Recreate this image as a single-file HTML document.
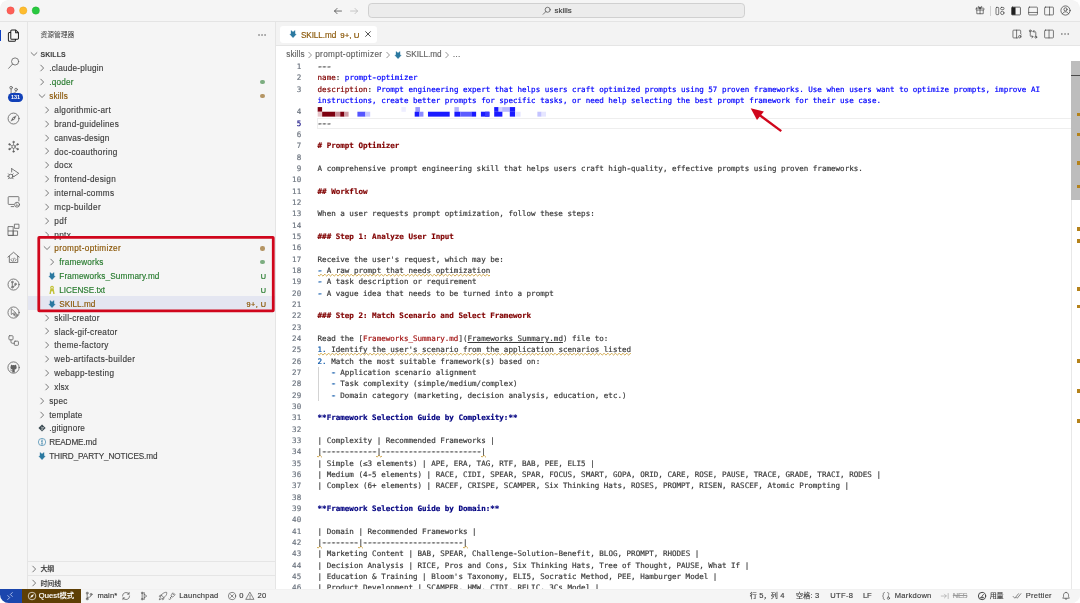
<!DOCTYPE html><html lang="zh-CN"><head><meta charset="utf-8"><title>SKILL.md — skills</title><style>
*{box-sizing:border-box;margin:0;padding:0}
html,body{width:1080px;height:603px;overflow:hidden;background:#fff}
body{font-family:"Liberation Sans", "Noto Sans CJK SC", sans-serif;font-size:13px;color:#3b3b3b;-webkit-font-smoothing:antialiased;-webkit-text-stroke:.22px}
#app{position:absolute;left:0;top:0;width:1715.65px;height:957.90px;zoom:0.6295;background:#f5f5f5;border-radius:14px;overflow:hidden;will-change:transform}
.abs{position:absolute}
#title{position:absolute;left:0;top:0;right:0;height:35px;border-bottom:1px solid #e4e4e4;background:#f5f5f5;z-index:5}
.tl{position:absolute;top:10.9px;width:12px;height:12px;border-radius:50%}
#cc{position:absolute;left:583.8px;top:5.5px;width:600.2px;height:23px;border:1px solid #d0d0d0;border-radius:6px;background:#ececec}
#act{position:absolute;left:0;top:34px;width:44px;bottom:22.5px;border-right:1px solid #e5e5e5;background:#f5f5f5}
.ai{position:absolute;left:0;width:44px;height:44px}
.ai svg{position:absolute;left:10px;top:10px;width:24px;height:24px;overflow:visible}
#side{position:absolute;left:44px;top:34px;width:395px;bottom:22.5px;border-right:1px solid #e5e5e5;background:#f5f5f5}
.row{position:absolute;left:0;right:0;height:22px;line-height:22px;white-space:nowrap;font-size:13px;color:#3b3b3b}
.row .tw{position:absolute;top:3.6px;width:16px;height:16px}
.row .lb{position:absolute;top:2.2px}
.row .dec{position:absolute;right:14.6px;top:2.2px;font-size:11.6px;text-align:right;letter-spacing:.75px;margin-right:-.75px;-webkit-text-stroke:.32px}
.dot{position:absolute;right:16.9px;top:8.2px;width:7px;height:7px;border-radius:50%;opacity:.6}
.g{color:#257a2c} .m{color:#895503}
#ed{position:absolute;left:439px;top:34px;right:0;bottom:22.5px;background:#fff}
#tabs{position:absolute;left:0;top:0;right:0;height:39.5px;background:#f3f3f3;border-bottom:1px solid #e5e5e5}
#tab{position:absolute;left:6.1px;top:7.5px;width:153.6px;height:26.5px;background:#fff;border-radius:5px}
#bc{position:absolute;left:0;top:42.2px;right:0;height:22px;line-height:22px;font-size:13px;color:#616161;white-space:nowrap}
#code{position:absolute;left:0;top:63.1px;right:0;bottom:0;font-family:"DejaVu Sans Mono", "Liberation Mono", monospace;font-size:12px;line-height:18px;color:#3b3b3b;white-space:pre;overflow:hidden;-webkit-text-stroke:.3px}
.ln{position:absolute;left:0;width:39.5px;text-align:right;color:#6e7681;height:18px}
.cl{position:absolute;left:65.5px;height:18px}
.k{color:#800000} .s{color:#0000ff} .h{color:#800000;font-weight:bold} .b{color:#000080;font-weight:bold} .l{color:#0451a5} .r{color:#a31515} .u{text-decoration:underline;text-underline-offset:2px}
.cl i{font-style:normal;-webkit-text-stroke:0;text-shadow:-1.3px 0 0 currentColor,1.3px 0 0 currentColor}
.sq{position:absolute;height:4px;top:14.300px;left:0;overflow:hidden}
#status{position:absolute;left:0;right:0;bottom:0;height:22.5px;background:#f5f5f5;border-top:1px solid #f1f1f1;font-size:12px;line-height:19.6px;color:#3b3b3b;white-space:nowrap}
.si{position:absolute;top:0;height:21.5px}
</style></head><body><div id="app">
<div id="title">
<svg class="abs" style="left:0;top:0" width="80" height="34" viewBox="0 0 80 34">
<circle cx="16.8" cy="16.8" r="5.900" fill="#fe5f57" stroke="#e14640" stroke-width=".5"/>
<circle cx="36.9" cy="16.8" r="5.900" fill="#febc2e" stroke="#dfa023" stroke-width=".5"/>
<circle cx="56.9" cy="16.8" r="5.900" fill="#28c840" stroke="#1dad2b" stroke-width=".5"/>
</svg>
<svg class="abs" style="left:528.5px;top:9px" width="16" height="16" viewBox="0 0 16 16" fill="none" stroke="#3b3b3b" stroke-width="1.15" stroke-linecap="round" stroke-linejoin="round"><path d="M13.5 8h-11M6.5 3.8 2.4 8l4.1 4.2"/></svg>
<svg class="abs" style="left:554.4px;top:9px" width="16" height="16" viewBox="0 0 16 16" fill="none" stroke="#b5b5b5" stroke-width="1.15" stroke-linecap="round" stroke-linejoin="round"><path d="M2.5 8h11M9.5 3.8 13.6 8l-4.1 4.2"/></svg>
<div id="cc">
<svg class="abs" style="left:276.2px;top:3px" width="15" height="15" viewBox="0 0 16 16" fill="none" stroke="#3b3b3b" stroke-width="1.1" stroke-linecap="round"><circle cx="9.6" cy="6.4" r="4.3"/><path d="M6.5 9.5 2 14"/></svg>
<div class="abs" style="left:295.6px;top:0;line-height:21px;font-size:12.5px;color:#3b3b3b">skills</div>
</div>
<svg class="abs" style="left:1549.6px;top:8.6px" width="16" height="16" viewBox="0 0 16 16" fill="none" stroke="#3b3b3b" stroke-width="1.05" stroke-linejoin="round" stroke-linecap="round"><rect x="1.800" y="5" width="12.400" height="3" rx=".5"/><path d="M2.900 8v5.900h10.200V8M8 5v8.900M8 4.800C6.500 4.800 4.700 4.300 4.900 3 5.200 1.700 7.300 2.300 8 4.800zM8 4.800c1.500 0 3.300-.5 3.100-1.800C10.800 1.700 8.700 2.300 8 4.800z"/></svg>
<div class="abs" style="left:1572.5px;top:9px;width:1px;height:16px;background:#d0d0d0"></div>
<svg class="abs" style="left:1581.4px;top:8.8px" width="16" height="16" viewBox="0 0 16 16" fill="none" stroke="#3b3b3b" stroke-width="1.05" stroke-linejoin="round" stroke-linecap="round"><rect x="1.600" y="2.200" width="4.300" height="11.600" rx="1.200"/><rect x="8.900" y="2.200" width="5.400" height="3.600" rx="1.500"/><circle cx="11.600" cy="11" r="2.700"/></svg>
<svg class="abs" style="left:1606.6px;top:8.8px" width="16" height="16" viewBox="0 0 16 16" fill="none" stroke="#1f1f1f" stroke-width="1.05" stroke-linejoin="round" stroke-linecap="round"><rect x="1" y="1.800" width="14" height="12.400" rx="1.200"/><path d="M1.200 2h6v12h-6z" fill="#1f1f1f" stroke="none"/></svg>
<svg class="abs" style="left:1632.7px;top:8.8px" width="16" height="16" viewBox="0 0 16 16" fill="none" stroke="#3b3b3b" stroke-width="1.05" stroke-linejoin="round" stroke-linecap="round"><rect x="1" y="1.800" width="14" height="12.400" rx="1.200"/><path d="M1 10.300h14"/></svg>
<svg class="abs" style="left:1659.0px;top:8.8px" width="16" height="16" viewBox="0 0 16 16" fill="none" stroke="#3b3b3b" stroke-width="1.05" stroke-linejoin="round" stroke-linecap="round"><rect x="1" y="1.800" width="14" height="12.400" rx="1.200"/><path d="M8.800 1.800v12.400"/></svg>
<svg class="abs" style="left:1684.0px;top:8.1px" width="17.5" height="17.5" viewBox="0 0 16 16" fill="none" stroke="#3b3b3b" stroke-width="1.05" stroke-linejoin="round" stroke-linecap="round"><circle cx="8" cy="8" r="6.700"/><circle cx="8" cy="6.300" r="2.300"/><path d="M3.500 12.900c.8-2 2.500-3 4.500-3s3.700 1 4.500 3"/></svg>
</div>
<div id="act">
<div class="abs" style="left:0;top:14px;width:1.9px;height:17.5px;background:#0d3fc2"></div>
<div class="ai" style="top:0.5px"><svg viewBox="0 0 24 24" fill="none" stroke="#1f1f1f" stroke-width="1.6" stroke-linejoin="round" stroke-linecap="round"><path d="M9.200 3.200h6.300l4.300 4.300v8.700a1.600 1.600 0 0 1-1.600 1.600H9.200a1.600 1.600 0 0 1-1.600-1.600V4.800a1.600 1.600 0 0 1 1.600-1.600zM15.300 3.400v4.300h4.300M7.600 7.200H5.400A1.600 1.600 0 0 0 3.800 8.800v10.600A1.600 1.600 0 0 0 5.400 21h8a1.600 1.600 0 0 0 1.600-1.600v-1.600"/></svg></div>
<div class="ai" style="top:44.5px"><svg viewBox="0 0 24 24" fill="none" stroke="#616161" stroke-width="1.3" stroke-linejoin="round" stroke-linecap="round"><circle cx="14.500" cy="8.700" r="5.700"/><path d="M10.400 12.900 4.200 19.600"/></svg></div>
<div class="ai" style="top:88.5px"><svg viewBox="0 0 24 24" fill="none" stroke="#616161" stroke-width="1.3" stroke-linejoin="round" stroke-linecap="round"><circle cx="8.100" cy="7.400" r="2.100"/><circle cx="16" cy="10.400" r="2.100"/><path d="M8.100 9.500v8M16 12.500c0 2.500-2 3.600-4.400 3.900"/></svg><div class="abs" style="left:12.700px;top:25.500px;width:23.700px;height:13.900px;border-radius:7px;background:#1241b8;color:#fff;font-size:8.800px;font-weight:bold;line-height:13.900px;text-align:center;letter-spacing:-.1px;-webkit-text-stroke:0">131</div></div>
<div class="ai" style="top:132.5px"><svg viewBox="0 0 24 24" fill="none" stroke="#616161" stroke-width="1.3" stroke-linejoin="round" stroke-linecap="round"><circle cx="12" cy="12" r="8.700"/><path d="M16.300 7.700 13.300 13.300 7.700 16.300 10.700 10.700z" fill="#616161" stroke-width=".5"/><circle cx="12" cy="12" r=".9" fill="#f5f5f5" stroke="none"/></svg></div>
<div class="ai" style="top:176.5px"><svg viewBox="0 0 24 24" fill="none" stroke="#616161" stroke-width="1.25" stroke-linejoin="round" stroke-linecap="round"><g transform="translate(12 12.300) scale(.9) translate(-12 -12)"><circle cx="12" cy="12" r="3"/><g fill="#616161" stroke-width=".8"><circle cx="12" cy="3.600" r="1.500"/><circle cx="12" cy="20.400" r="1.500"/><circle cx="4.800" cy="7.800" r="1.500"/><circle cx="19.200" cy="7.800" r="1.500"/><circle cx="4.800" cy="16.200" r="1.500"/><circle cx="19.200" cy="16.200" r="1.500"/></g><path d="M12 5.100v3.900M12 15v3.900M6.100 8.600 9.400 10.500M17.900 8.600 14.600 10.500M6.100 15.400 9.400 13.500M17.900 15.400 14.600 13.500" stroke-width="1.100"/></g></svg></div>
<div class="ai" style="top:220.5px"><svg viewBox="0 0 24 24" fill="none" stroke="#616161" stroke-width="1.3" stroke-linejoin="round" stroke-linecap="round"><path d="M9 4.200 20.300 11.600 12.600 16.800M9 4.200v5.300"/><circle cx="7.600" cy="16.400" r="3.300"/><path d="M4.300 16.400H2.600M12.600 16.400h-1.700M5.100 13.800 3.800 12.400M10.100 13.800l1.300-1.400M5.100 19l-1.300 1.400M10.100 19l1.300 1.400"/></svg></div>
<div class="ai" style="top:264.5px"><svg viewBox="0 0 24 24" fill="none" stroke="#616161" stroke-width="1.3" stroke-linejoin="round" stroke-linecap="round"><path d="M20.500 11V5.300a1.100 1.100 0 0 0-1.100-1.100H4.600a1.100 1.100 0 0 0-1.100 1.100v10.200a1.100 1.100 0 0 0 1.100 1.100h7.600M8.200 20h4"/><circle cx="17.600" cy="17" r="3.900"/><path d="M16.400 15.600 17.900 17l-1.500 1.400M18.600 18.500h.9" stroke-width="1.1"/></svg></div>
<div class="ai" style="top:308.5px"><svg viewBox="0 0 24 24" fill="none" stroke="#616161" stroke-width="1.3" stroke-linejoin="round" stroke-linecap="round"><path d="M3.800 7.300h7.600v14H3.800zM3.800 14.300h14.600v7H3.800M11.400 14.300v7M14 3.500h6.600v6.600H14z"/></svg></div>
<div class="ai" style="top:352.5px"><svg viewBox="0 0 24 24" fill="none" stroke="#616161" stroke-width="1.35" stroke-linejoin="round" stroke-linecap="round"><path d="M3 11.300 12 3.600l9 7.700M5.300 10v9.800h13.400V10"/><path d="M9.600 13.600 7.800 15.500l1.800 1.900M14.400 13.600l1.800 1.900-1.800 1.900M12.800 12.800 11.200 18.200" stroke-width="1.1"/></svg></div>
<div class="ai" style="top:396.5px"><svg viewBox="0 0 24 24" fill="none" stroke="#616161" stroke-width="1.3" stroke-linejoin="round" stroke-linecap="round"><circle cx="12" cy="12" r="8.800"/><circle cx="10" cy="8" r="1.300"/><circle cx="10" cy="16.300" r="1.300"/><circle cx="15" cy="11.300" r="1.300"/><path d="M10 9.300v5.700M15 12.600c0 1.600-1.600 2.200-3.200 2.300"/></svg></div>
<div class="ai" style="top:440.5px"><svg viewBox="0 0 24 24" fill="none" stroke="#616161" stroke-width="1.25" stroke-linejoin="round" stroke-linecap="round"><circle cx="12" cy="12" r="8.900"/><path d="M8.400 6.400v8.800l2.300-2 1.500 3 1.300-.6-1.500-3h3z" stroke-width="1.100"/><circle cx="15.800" cy="16" r="2.300" stroke-width="1.050"/><circle cx="15.800" cy="16" r=".5" stroke-width=".8"/></svg></div>
<div class="ai" style="top:484.5px"><svg viewBox="0 0 24 24" fill="none" stroke="#616161" stroke-width="1.25" stroke-linejoin="round" stroke-linecap="round"><rect x="4.600" y="4.300" width="6.600" height="6.600" rx="1.300"/><rect x="13.200" y="13" width="6.600" height="6.600" rx="1.300"/><path d="M7.900 10.900v3.400a2 2 0 0 0 2 2h3.300"/></svg></div>
<div class="ai" style="top:528.5px"><svg viewBox="0 0 24 24" fill="none" stroke="#616161" stroke-width="1.3" stroke-linejoin="round" stroke-linecap="round"><circle cx="12" cy="12" r="9" /><g transform="translate(12 12.600) scale(.8) translate(-12 -12)"><path d="M9.600 21v-2.600c-2.700.6-3.300-1.200-3.300-1.200-.5-1.100-1.100-1.400-1.100-1.400-.9-.6.100-.6.100-.6 1 .1 1.500 1 1.500 1 .9 1.500 2.300 1.100 2.900.8.100-.6.300-1.100.6-1.300-2.200-.2-4.500-1.100-4.500-4.800 0-1.100.4-1.900 1-2.600-.1-.3-.4-1.300.1-2.600 0 0 .8-.3 2.700 1a9.300 9.300 0 0 1 4.800 0c1.900-1.300 2.700-1 2.700-1 .5 1.300.2 2.300.1 2.600.6.700 1 1.500 1 2.600 0 3.700-2.300 4.600-4.500 4.800.4.300.7.900.7 1.800V21z" fill="#616161" stroke="none"/></g></svg></div>
</div>
<div id="side">
<div class="abs" style="left:20.3px;top:11.8px;font-size:10.8px;line-height:20px;color:#3b3b3b;-webkit-text-stroke:0">资源管理器</div>
<div class="abs" style="left:363.7px;top:13px;width:16px;height:16px"><svg width="16" height="16" viewBox="0 0 16 16" fill="#3b3b3b"><circle cx="3.200" cy="8" r="1.050"/><circle cx="8" cy="8" r="1.050"/><circle cx="12.800" cy="8" r="1.050"/></svg></div>
<div class="row" style="top:41px"><span class="tw" style="left:1.7px;top:3px"><svg width="16" height="16" viewBox="0 0 16 16" fill="none" stroke="#4a4a4a" stroke-width="1.15" stroke-linecap="round" stroke-linejoin="round"><path d="M3.400 5.800 8 10.300 12.600 5.800"/></svg></span><span class="lb" style="left:20.3px;top:.6px;font-weight:bold;font-size:11px;color:#3b3b3b;letter-spacing:.2px;-webkit-text-stroke:.1px">SKILLS</span></div>
<div class="row" style="top:63px"><span class="tw" style="left:15.0px"><svg width="16" height="16" viewBox="0 0 16 16" fill="none" stroke="#4a4a4a" stroke-width="1.15" stroke-linecap="round" stroke-linejoin="round"><path d="M6 3.400 10.500 8 6 12.600"/></svg></span><span class="lb " style="left:34.2px;letter-spacing:0.399px">.claude-plugin</span></div>
<div class="row" style="top:85px"><span class="tw" style="left:15.0px"><svg width="16" height="16" viewBox="0 0 16 16" fill="none" stroke="#4a4a4a" stroke-width="1.15" stroke-linecap="round" stroke-linejoin="round"><path d="M6 3.400 10.500 8 6 12.600"/></svg></span><span class="lb g" style="left:34.2px;letter-spacing:0.335px">.qoder</span><span class="dot" style="background:#2b7d32"></span></div>
<div class="row" style="top:107px"><span class="tw" style="left:15.0px"><svg width="16" height="16" viewBox="0 0 16 16" fill="none" stroke="#4a4a4a" stroke-width="1.15" stroke-linecap="round" stroke-linejoin="round"><path d="M3.400 5.800 8 10.300 12.600 5.800"/></svg></span><span class="lb m" style="left:34.2px;letter-spacing:0.303px">skills</span><span class="dot" style="background:#895503"></span></div>
<div class="row" style="top:129px"><span class="tw" style="left:23.0px"><svg width="16" height="16" viewBox="0 0 16 16" fill="none" stroke="#4a4a4a" stroke-width="1.15" stroke-linecap="round" stroke-linejoin="round"><path d="M6 3.400 10.500 8 6 12.600"/></svg></span><span class="lb " style="left:42.2px;letter-spacing:0.529px">algorithmic-art</span></div>
<div class="row" style="top:151px"><span class="tw" style="left:23.0px"><svg width="16" height="16" viewBox="0 0 16 16" fill="none" stroke="#4a4a4a" stroke-width="1.15" stroke-linecap="round" stroke-linejoin="round"><path d="M6 3.400 10.500 8 6 12.600"/></svg></span><span class="lb " style="left:42.2px;letter-spacing:0.430px">brand-guidelines</span></div>
<div class="row" style="top:173px"><span class="tw" style="left:23.0px"><svg width="16" height="16" viewBox="0 0 16 16" fill="none" stroke="#4a4a4a" stroke-width="1.15" stroke-linecap="round" stroke-linejoin="round"><path d="M6 3.400 10.500 8 6 12.600"/></svg></span><span class="lb " style="left:42.2px;letter-spacing:0.326px">canvas-design</span></div>
<div class="row" style="top:195px"><span class="tw" style="left:23.0px"><svg width="16" height="16" viewBox="0 0 16 16" fill="none" stroke="#4a4a4a" stroke-width="1.15" stroke-linecap="round" stroke-linejoin="round"><path d="M6 3.400 10.500 8 6 12.600"/></svg></span><span class="lb " style="left:42.2px;letter-spacing:0.503px">doc-coauthoring</span></div>
<div class="row" style="top:217px"><span class="tw" style="left:23.0px"><svg width="16" height="16" viewBox="0 0 16 16" fill="none" stroke="#4a4a4a" stroke-width="1.15" stroke-linecap="round" stroke-linejoin="round"><path d="M6 3.400 10.500 8 6 12.600"/></svg></span><span class="lb " style="left:42.2px;letter-spacing:0.457px">docx</span></div>
<div class="row" style="top:239px"><span class="tw" style="left:23.0px"><svg width="16" height="16" viewBox="0 0 16 16" fill="none" stroke="#4a4a4a" stroke-width="1.15" stroke-linecap="round" stroke-linejoin="round"><path d="M6 3.400 10.500 8 6 12.600"/></svg></span><span class="lb " style="left:42.2px;letter-spacing:0.526px">frontend-design</span></div>
<div class="row" style="top:261px"><span class="tw" style="left:23.0px"><svg width="16" height="16" viewBox="0 0 16 16" fill="none" stroke="#4a4a4a" stroke-width="1.15" stroke-linecap="round" stroke-linejoin="round"><path d="M6 3.400 10.500 8 6 12.600"/></svg></span><span class="lb " style="left:42.2px;letter-spacing:0.477px">internal-comms</span></div>
<div class="row" style="top:283px"><span class="tw" style="left:23.0px"><svg width="16" height="16" viewBox="0 0 16 16" fill="none" stroke="#4a4a4a" stroke-width="1.15" stroke-linecap="round" stroke-linejoin="round"><path d="M6 3.400 10.500 8 6 12.600"/></svg></span><span class="lb " style="left:42.2px;letter-spacing:0.590px">mcp-builder</span></div>
<div class="row" style="top:305px"><span class="tw" style="left:23.0px"><svg width="16" height="16" viewBox="0 0 16 16" fill="none" stroke="#4a4a4a" stroke-width="1.15" stroke-linecap="round" stroke-linejoin="round"><path d="M6 3.400 10.500 8 6 12.600"/></svg></span><span class="lb " style="left:42.2px;letter-spacing:0.774px">pdf</span></div>
<div class="row" style="top:327px"><span class="tw" style="left:23.0px"><svg width="16" height="16" viewBox="0 0 16 16" fill="none" stroke="#4a4a4a" stroke-width="1.15" stroke-linecap="round" stroke-linejoin="round"><path d="M6 3.400 10.500 8 6 12.600"/></svg></span><span class="lb " style="left:42.2px;letter-spacing:0.544px">pptx</span></div>
<div class="row" style="top:349px"><span class="tw" style="left:23.0px"><svg width="16" height="16" viewBox="0 0 16 16" fill="none" stroke="#4a4a4a" stroke-width="1.15" stroke-linecap="round" stroke-linejoin="round"><path d="M3.400 5.800 8 10.300 12.600 5.800"/></svg></span><span class="lb m" style="left:42.2px;letter-spacing:0.541px">prompt-optimizer</span><span class="dot" style="background:#895503"></span></div>
<div class="row" style="top:371px"><span class="tw" style="left:31.0px"><svg width="16" height="16" viewBox="0 0 16 16" fill="none" stroke="#4a4a4a" stroke-width="1.15" stroke-linecap="round" stroke-linejoin="round"><path d="M6 3.400 10.500 8 6 12.600"/></svg></span><span class="lb g" style="left:50.2px;letter-spacing:0.335px">frameworks</span><span class="dot" style="background:#2b7d32"></span></div>
<div class="row" style="top:393px"><span class="tw" style="left:31.0px"><svg width="16" height="16" viewBox="0 0 16 16"><path d="M4.800 2.200 8 4.600 11.200 2.200V7.900L13.100 8.300 8 13.900 2.900 8.300 4.800 7.900z" fill="#2b79a0" stroke="#2b79a0" stroke-width=".5" stroke-linejoin="round"/></svg></span><span class="lb g" style="left:50.2px;letter-spacing:0.211px">Frameworks_Summary.md</span><span class="dec g">U</span></div>
<div class="row" style="top:415px"><span class="tw" style="left:31.0px"><svg width="16" height="16" viewBox="0 0 16 16"><path d="M8 1.300a3 3 0 0 1 2.400 4.800l.500 1.200 1.300 6.900-2.200.3-.9-4.600H6.900l-.9 4.600-2.200-.3 1.300-6.900.5-1.200A3 3 0 0 1 8 1.300zm0 1.800a1.200 1.200 0 1 0 0 2.400 1.200 1.200 0 0 0 0-2.400z" fill="#c3c23a"/></svg></span><span class="lb g" style="left:50.2px;letter-spacing:-0.019px">LICENSE.txt</span><span class="dec g">U</span></div>
<div class="row" style="top:437px;background:#e4e6f1"><span class="tw" style="left:31.0px"><svg width="16" height="16" viewBox="0 0 16 16"><path d="M4.800 2.200 8 4.600 11.200 2.200V7.900L13.100 8.300 8 13.900 2.900 8.300 4.800 7.900z" fill="#2b79a0" stroke="#2b79a0" stroke-width=".5" stroke-linejoin="round"/></svg></span><span class="lb m" style="left:50.2px;letter-spacing:0.033px">SKILL.md</span><span class="dec m">9+, U</span></div>
<div class="row" style="top:459px"><span class="tw" style="left:23.0px"><svg width="16" height="16" viewBox="0 0 16 16" fill="none" stroke="#4a4a4a" stroke-width="1.15" stroke-linecap="round" stroke-linejoin="round"><path d="M6 3.400 10.500 8 6 12.600"/></svg></span><span class="lb " style="left:42.2px;letter-spacing:0.440px">skill-creator</span></div>
<div class="row" style="top:481px"><span class="tw" style="left:23.0px"><svg width="16" height="16" viewBox="0 0 16 16" fill="none" stroke="#4a4a4a" stroke-width="1.15" stroke-linecap="round" stroke-linejoin="round"><path d="M6 3.400 10.500 8 6 12.600"/></svg></span><span class="lb " style="left:42.2px;letter-spacing:0.489px">slack-gif-creator</span></div>
<div class="row" style="top:503px"><span class="tw" style="left:23.0px"><svg width="16" height="16" viewBox="0 0 16 16" fill="none" stroke="#4a4a4a" stroke-width="1.15" stroke-linecap="round" stroke-linejoin="round"><path d="M6 3.400 10.500 8 6 12.600"/></svg></span><span class="lb " style="left:42.2px;letter-spacing:0.538px">theme-factory</span></div>
<div class="row" style="top:525px"><span class="tw" style="left:23.0px"><svg width="16" height="16" viewBox="0 0 16 16" fill="none" stroke="#4a4a4a" stroke-width="1.15" stroke-linecap="round" stroke-linejoin="round"><path d="M6 3.400 10.500 8 6 12.600"/></svg></span><span class="lb " style="left:42.2px;letter-spacing:0.564px">web-artifacts-builder</span></div>
<div class="row" style="top:547px"><span class="tw" style="left:23.0px"><svg width="16" height="16" viewBox="0 0 16 16" fill="none" stroke="#4a4a4a" stroke-width="1.15" stroke-linecap="round" stroke-linejoin="round"><path d="M6 3.400 10.500 8 6 12.600"/></svg></span><span class="lb " style="left:42.2px;letter-spacing:0.526px">webapp-testing</span></div>
<div class="row" style="top:569px"><span class="tw" style="left:23.0px"><svg width="16" height="16" viewBox="0 0 16 16" fill="none" stroke="#4a4a4a" stroke-width="1.15" stroke-linecap="round" stroke-linejoin="round"><path d="M6 3.400 10.500 8 6 12.600"/></svg></span><span class="lb " style="left:42.2px;letter-spacing:0.297px">xlsx</span></div>
<div class="row" style="top:591px"><span class="tw" style="left:15.0px"><svg width="16" height="16" viewBox="0 0 16 16" fill="none" stroke="#4a4a4a" stroke-width="1.15" stroke-linecap="round" stroke-linejoin="round"><path d="M6 3.400 10.500 8 6 12.600"/></svg></span><span class="lb " style="left:34.2px;letter-spacing:0.471px">spec</span></div>
<div class="row" style="top:613px"><span class="tw" style="left:15.0px"><svg width="16" height="16" viewBox="0 0 16 16" fill="none" stroke="#4a4a4a" stroke-width="1.15" stroke-linecap="round" stroke-linejoin="round"><path d="M6 3.400 10.500 8 6 12.600"/></svg></span><span class="lb " style="left:34.2px;letter-spacing:0.393px">template</span></div>
<div class="row" style="top:635px"><span class="tw" style="left:15.0px"><svg width="16" height="16" viewBox="0 0 16 16"><path d="M8 2.300 13.700 8 8 13.700 2.300 8z" fill="#3a4a52"/><path d="M6.300 5.900 8 7.600M8 7.600v3M8 7.600l1.900 0" stroke="#f5f5f5" stroke-width=".9" fill="none"/><circle cx="8" cy="10.600" r=".8" fill="#f5f5f5"/><circle cx="10" cy="7.600" r=".8" fill="#f5f5f5"/></svg></span><span class="lb " style="left:34.2px;letter-spacing:0.367px">.gitignore</span></div>
<div class="row" style="top:657px"><span class="tw" style="left:15.0px"><svg width="16" height="16" viewBox="0 0 16 16" fill="none" stroke="#3d86ad" stroke-width="1.1"><circle cx="8" cy="8" r="5.800"/><path d="M8 7.200v3.800M7 11h2M7.200 7.200H8" stroke-linecap="round"/><circle cx="8" cy="5" r=".55" fill="#3d86ad"/></svg></span><span class="lb " style="left:34.2px;letter-spacing:-0.208px">README.md</span></div>
<div class="row" style="top:679px"><span class="tw" style="left:15.0px"><svg width="16" height="16" viewBox="0 0 16 16"><path d="M4.800 2.200 8 4.600 11.200 2.200V7.900L13.100 8.300 8 13.900 2.900 8.300 4.800 7.900z" fill="#2b79a0" stroke="#2b79a0" stroke-width=".5" stroke-linejoin="round"/></svg></span><span class="lb " style="left:34.2px;letter-spacing:-0.164px">THIRD_PARTY_NOTICES.md</span></div>
<div class="row" style="top:857.3px;border-top:1px solid #e5e5e5;height:22.4px"><span class="tw" style="left:1.7px"><svg width="16" height="16" viewBox="0 0 16 16" fill="none" stroke="#4a4a4a" stroke-width="1.15" stroke-linecap="round" stroke-linejoin="round"><path d="M6 3.400 10.500 8 6 12.600"/></svg></span><span class="lb" style="left:20.3px;top:.700px;font-weight:500;font-size:11px;color:#3b3b3b;-webkit-text-stroke:.2px">大纲</span></div>
<div class="row" style="top:879.7px;border-top:1px solid #e5e5e5;height:22.4px"><span class="tw" style="left:1.7px"><svg width="16" height="16" viewBox="0 0 16 16" fill="none" stroke="#4a4a4a" stroke-width="1.15" stroke-linecap="round" stroke-linejoin="round"><path d="M6 3.400 10.500 8 6 12.600"/></svg></span><span class="lb" style="left:20.3px;top:.700px;font-weight:500;font-size:11px;color:#3b3b3b;-webkit-text-stroke:.2px">时间线</span></div>
</div>
<div id="ed">
<div id="tabs"><div id="tab">
<span class="abs" style="left:11.9px;top:5.300px;width:16px;height:16px"><svg width="16" height="16" viewBox="0 0 16 16"><path d="M4.800 2.200 8 4.600 11.200 2.200V7.900L13.100 8.300 8 13.900 2.900 8.300 4.800 7.900z" fill="#2b79a0" stroke="#2b79a0" stroke-width=".5" stroke-linejoin="round"/></svg></span>
<span class="abs m" style="left:32.9px;top:1px;line-height:27px;font-size:13px;letter-spacing:-0.092px">SKILL.md</span>
<span class="abs m" style="left:95.5px;top:1.300px;line-height:27px;font-size:12.500px;-webkit-text-stroke:.32px;letter-spacing:0.046px">9+, U</span>
<svg class="abs" style="left:132.3px;top:5.300px" width="16" height="16" viewBox="0 0 16 16" fill="none" stroke="#333" stroke-width="1.350" stroke-linecap="round"><path d="M4.200 4.200 11.800 11.800M11.800 4.200 4.200 11.800"/></svg>
</div>
<svg class="abs" style="left:1168.6px;top:12.8px" width="16" height="16" viewBox="0 0 16 16" fill="none" stroke="#3b3b3b" stroke-width="1.05" stroke-linejoin="round" stroke-linecap="round"><path d="M13.800 7.500V3a1.200 1.200 0 0 0-1.200-1.200H2.700A1.200 1.200 0 0 0 1.500 3v10a1.200 1.200 0 0 0 1.200 1.200h6.500M7.300 1.800v12.400"/><circle cx="12.300" cy="12.300" r="1.900"/><path d="M13.500 10.800l1.300-1.500"/></svg>
<svg class="abs" style="left:1193.7px;top:12.8px" width="16" height="16" viewBox="0 0 16 16" fill="none" stroke="#3b3b3b" stroke-width="1.05" stroke-linejoin="round" stroke-linecap="round"><circle cx="3.600" cy="3" r="1.500"/><circle cx="12.400" cy="13" r="1.500"/><path d="M3.600 4.500v5.700a2 2 0 0 0 2 2h2.200M6.300 10.500 8 12.200 6.300 13.900M12.400 11.500V5.800a2 2 0 0 0-2-2H8.200M9.700 2.100 8 3.800l1.700 1.700"/></svg>
<svg class="abs" style="left:1220.0px;top:12.8px" width="16" height="16" viewBox="0 0 16 16" fill="none" stroke="#3b3b3b" stroke-width="1.05" stroke-linejoin="round" stroke-linecap="round"><rect x="1" y="1.800" width="14" height="12.400" rx="1.200"/><path d="M8 1.800v12.400"/></svg>
<svg class="abs" style="left:1245.6px;top:12.8px" width="16" height="16" viewBox="0 0 16 16" fill="#3b3b3b"><circle cx="3" cy="8" r="1.050"/><circle cx="8" cy="8" r="1.050"/><circle cx="13" cy="8" r="1.050"/></svg>
</div>
<div id="bc">
<span class="abs" style="left:15.8px;top:0;letter-spacing:0.170px">skills</span>
<svg class="abs" style="left:45.8px;top:3.200px" width="16" height="16" viewBox="0 0 16 16" fill="none" stroke="#616161" stroke-width="1.050" stroke-linecap="round" stroke-linejoin="round"><path d="M6 3.600 10.300 8 6 12.400"/></svg>
<span class="abs" style="left:61.7px;top:0;letter-spacing:0.594px">prompt-optimizer</span>
<svg class="abs" style="left:169.7px;top:3.200px" width="16" height="16" viewBox="0 0 16 16" fill="none" stroke="#616161" stroke-width="1.050" stroke-linecap="round" stroke-linejoin="round"><path d="M6 3.600 10.300 8 6 12.400"/></svg>
<span class="abs" style="left:184.9px;top:3.200px;width:16px;height:16px"><svg width="16" height="16" viewBox="0 0 16 16"><path d="M4.800 2.200 8 4.600 11.200 2.200V7.900L13.100 8.300 8 13.900 2.900 8.300 4.800 7.900z" fill="#2b79a0" stroke="#2b79a0" stroke-width=".5" stroke-linejoin="round"/></svg></span>
<span class="abs" style="left:205.6px;top:0;letter-spacing:-0.012px">SKILL.md</span>
<svg class="abs" style="left:262.9px;top:3.200px" width="16" height="16" viewBox="0 0 16 16" fill="none" stroke="#616161" stroke-width="1.050" stroke-linecap="round" stroke-linejoin="round"><path d="M6 3.600 10.300 8 6 12.400"/></svg>
<span class="abs" style="left:279.7px;top:0;letter-spacing:-0.600px">…</span>
</div>
<div id="code">
<div class="ln" style="top:0px;color:#6e7681">1</div>
<div class="cl" style="top:0px"><i>-</i><i>-</i><i>-</i></div>
<div class="ln" style="top:18px;color:#6e7681">2</div>
<div class="cl" style="top:18px"><span class="k">name</span>: <span class="s">prompt<i>-</i>optimizer</span></div>
<div class="ln" style="top:36px;color:#6e7681">3</div>
<div class="cl" style="top:36px"><span class="k">description</span>: <span class="s">Prompt engineering expert that helps users craft optimized prompts using 57 proven frameworks. Use when users want to optimize prompts, improve AI</span></div>
<div class="cl" style="top:54px"><span class="s">instructions, create better prompts for specific tasks, or need help selecting the best prompt framework for their use case.</span></div>
<div class="ln" style="top:72px;color:#6e7681">4</div>
<svg class="abs" style="left:65.5px;top:72px;overflow:visible" width="400" height="18"><rect x="-0.5" y="1.7" width="7.0" height="7.5" fill="#7d0010"/><rect x="132.5" y="1.7" width="7.1" height="7.5" fill="#eeeeff"/><rect x="154.7" y="1.7" width="7.3" height="7.5" fill="#9a9aff"/><rect x="216.7" y="1.7" width="7.1" height="7.5" fill="#b5b5ff"/><rect x="279.9" y="1.7" width="7.0" height="7.5" fill="#1a1aff"/><rect x="286.9" y="1.7" width="5.6" height="7.5" fill="#d5d5ff"/><rect x="292.5" y="1.7" width="12.2" height="7.5" fill="#b9b9ff"/><rect x="304.7" y="1.7" width="8.4" height="7.5" fill="#1a1aff"/><rect x="6.5" y="9.1" width="21.1" height="7.8" fill="#7d0010"/><rect x="27.6" y="9.1" width="7.6" height="7.8" fill="#c9909a"/><rect x="35.3" y="9.1" width="6.7" height="7.8" fill="#7d0010"/><rect x="41.9" y="9.1" width="6.7" height="7.8" fill="#cf9ea6"/><rect x="-0.5" y="9.1" width="7.0" height="7.8" fill="#e6c5ca"/><rect x="62.6" y="9.1" width="12.7" height="7.8" fill="#5555ff"/><rect x="75.3" y="9.1" width="7.6" height="7.8" fill="#c9c9ff"/><rect x="153.6" y="9.1" width="7.5" height="7.8" fill="#1a1aff"/><rect x="161.1" y="9.1" width="6.4" height="7.8" fill="#8a8aff"/><rect x="174.7" y="9.1" width="34.5" height="7.8" fill="#1a1aff"/><rect x="216.7" y="9.1" width="9.5" height="7.8" fill="#1a1aff"/><rect x="226.2" y="9.1" width="17.5" height="7.8" fill="#5c5cff"/><rect x="243.7" y="9.1" width="7.5" height="7.8" fill="#1a1aff"/><rect x="258.8" y="9.1" width="13.5" height="7.8" fill="#1a1aff"/><rect x="265.4" y="9.1" width="6.8" height="7.8" fill="#3a3aff"/><rect x="279.9" y="9.1" width="13.0" height="7.8" fill="#1a1aff"/><rect x="304.7" y="9.1" width="8.4" height="7.8" fill="#1a1aff"/><rect x="313.1" y="9.1" width="8.7" height="7.8" fill="#e3e3ff"/><rect x="348.5" y="9.1" width="6.7" height="7.8" fill="#c4c4ff"/><rect x="355.2" y="9.1" width="7.0" height="7.8" fill="#e6e6ff"/></svg>
<div class="ln" style="top:90px;color:#171184">5</div>
<div class="abs" style="left:65.1px;right:0;top:90px;height:18px;border:2px solid #eeeeee"></div>
<div class="cl" style="top:90px"><i>-</i><i>-</i><i>-</i></div>
<div class="ln" style="top:108px;color:#6e7681">6</div>
<div class="cl" style="top:108px"></div>
<div class="ln" style="top:126px;color:#6e7681">7</div>
<div class="cl" style="top:126px"><span class="h"># Prompt Optimizer</span></div>
<div class="ln" style="top:144px;color:#6e7681">8</div>
<div class="cl" style="top:144px"></div>
<div class="ln" style="top:162px;color:#6e7681">9</div>
<div class="cl" style="top:162px">A comprehensive prompt engineering skill that helps users craft high<i>-</i>quality, effective prompts using proven frameworks.</div>
<div class="ln" style="top:180px;color:#6e7681">10</div>
<div class="cl" style="top:180px"></div>
<div class="ln" style="top:198px;color:#6e7681">11</div>
<div class="cl" style="top:198px"><span class="h">## Workflow</span></div>
<div class="ln" style="top:216px;color:#6e7681">12</div>
<div class="cl" style="top:216px"></div>
<div class="ln" style="top:234px;color:#6e7681">13</div>
<div class="cl" style="top:234px">When a user requests prompt optimization, follow these steps:</div>
<div class="ln" style="top:252px;color:#6e7681">14</div>
<div class="cl" style="top:252px"></div>
<div class="ln" style="top:270px;color:#6e7681">15</div>
<div class="cl" style="top:270px"><span class="h">### Step 1: Analyze User Input</span></div>
<div class="ln" style="top:288px;color:#6e7681">16</div>
<div class="cl" style="top:288px"></div>
<div class="ln" style="top:306px;color:#6e7681">17</div>
<div class="cl" style="top:306px">Receive the user's request, which may be:</div>
<div class="ln" style="top:324px;color:#6e7681">18</div>
<div class="cl" style="top:324px"><span class="l"><i>-</i></span> A raw prompt that needs optimization<svg class="sq" style="left:0.0px" width="274.5" height="4" viewBox="0 0 274.5 4" fill="none" stroke="#c08a10" stroke-width="1.150" stroke-linejoin="round"><path d="M0 1.800L1.7 3.300L4.75 .400L6 1.800M6 1.800L7.7 3.300L10.75 .400L12 1.800M12 1.800L13.7 3.300L16.75 .400L18 1.800M18 1.800L19.7 3.300L22.75 .400L24 1.800M24 1.800L25.7 3.300L28.75 .400L30 1.800M30 1.800L31.7 3.300L34.75 .400L36 1.800M36 1.800L37.7 3.300L40.75 .400L42 1.800M42 1.800L43.7 3.300L46.75 .400L48 1.800M48 1.800L49.7 3.300L52.75 .400L54 1.800M54 1.800L55.7 3.300L58.75 .400L60 1.800M60 1.800L61.7 3.300L64.75 .400L66 1.800M66 1.800L67.7 3.300L70.75 .400L72 1.800M72 1.800L73.7 3.300L76.75 .400L78 1.800M78 1.800L79.7 3.300L82.75 .400L84 1.800M84 1.800L85.7 3.300L88.75 .400L90 1.800M90 1.800L91.7 3.300L94.75 .400L96 1.800M96 1.800L97.7 3.300L100.75 .400L102 1.800M102 1.800L103.7 3.300L106.75 .400L108 1.800M108 1.800L109.7 3.300L112.75 .400L114 1.800M114 1.800L115.7 3.300L118.75 .400L120 1.800M120 1.800L121.7 3.300L124.75 .400L126 1.800M126 1.800L127.7 3.300L130.75 .400L132 1.800M132 1.800L133.7 3.300L136.75 .400L138 1.800M138 1.800L139.7 3.300L142.75 .400L144 1.800M144 1.800L145.7 3.300L148.75 .400L150 1.800M150 1.800L151.7 3.300L154.75 .400L156 1.800M156 1.800L157.7 3.300L160.75 .400L162 1.800M162 1.800L163.7 3.300L166.75 .400L168 1.800M168 1.800L169.7 3.300L172.75 .400L174 1.800M174 1.800L175.7 3.300L178.75 .400L180 1.800M180 1.800L181.7 3.300L184.75 .400L186 1.800M186 1.800L187.7 3.300L190.75 .400L192 1.800M192 1.800L193.7 3.300L196.75 .400L198 1.800M198 1.800L199.7 3.300L202.75 .400L204 1.800M204 1.800L205.7 3.300L208.75 .400L210 1.800M210 1.800L211.7 3.300L214.75 .400L216 1.800M216 1.800L217.7 3.300L220.75 .400L222 1.800M222 1.800L223.7 3.300L226.75 .400L228 1.800M228 1.800L229.7 3.300L232.75 .400L234 1.800M234 1.800L235.7 3.300L238.75 .400L240 1.800M240 1.800L241.7 3.300L244.75 .400L246 1.800M246 1.800L247.7 3.300L250.75 .400L252 1.800M252 1.800L253.7 3.300L256.75 .400L258 1.800M258 1.800L259.7 3.300L262.75 .400L264 1.800M264 1.800L265.7 3.300L268.75 .400L270 1.800M270 1.800L271.7 3.300L274.75 .400L276 1.800"/></svg></div>
<div class="ln" style="top:342px;color:#6e7681">19</div>
<div class="cl" style="top:342px"><span class="l"><i>-</i></span> A task description or requirement</div>
<div class="ln" style="top:360px;color:#6e7681">20</div>
<div class="cl" style="top:360px"><span class="l"><i>-</i></span> A vague idea that needs to be turned into a prompt</div>
<div class="ln" style="top:378px;color:#6e7681">21</div>
<div class="cl" style="top:378px"></div>
<div class="ln" style="top:396px;color:#6e7681">22</div>
<div class="cl" style="top:396px"><span class="h">### Step 2: Match Scenario and Select Framework</span></div>
<div class="ln" style="top:414px;color:#6e7681">23</div>
<div class="cl" style="top:414px"></div>
<div class="ln" style="top:432px;color:#6e7681">24</div>
<div class="cl" style="top:432px">Read the [<span class="r">Frameworks_Summary.md</span>](<span class="u">Frameworks_Summary.md</span>) file to:</div>
<div class="ln" style="top:450px;color:#6e7681">25</div>
<div class="cl" style="top:450px"><span class="l">1.</span> Identify the user's scenario from the application scenarios listed<svg class="sq" style="left:0.0px" width="498.5" height="4" viewBox="0 0 498.5 4" fill="none" stroke="#c08a10" stroke-width="1.150" stroke-linejoin="round"><path d="M0 1.800L1.7 3.300L4.75 .400L6 1.800M6 1.800L7.7 3.300L10.75 .400L12 1.800M12 1.800L13.7 3.300L16.75 .400L18 1.800M18 1.800L19.7 3.300L22.75 .400L24 1.800M24 1.800L25.7 3.300L28.75 .400L30 1.800M30 1.800L31.7 3.300L34.75 .400L36 1.800M36 1.800L37.7 3.300L40.75 .400L42 1.800M42 1.800L43.7 3.300L46.75 .400L48 1.800M48 1.800L49.7 3.300L52.75 .400L54 1.800M54 1.800L55.7 3.300L58.75 .400L60 1.800M60 1.800L61.7 3.300L64.75 .400L66 1.800M66 1.800L67.7 3.300L70.75 .400L72 1.800M72 1.800L73.7 3.300L76.75 .400L78 1.800M78 1.800L79.7 3.300L82.75 .400L84 1.800M84 1.800L85.7 3.300L88.75 .400L90 1.800M90 1.800L91.7 3.300L94.75 .400L96 1.800M96 1.800L97.7 3.300L100.75 .400L102 1.800M102 1.800L103.7 3.300L106.75 .400L108 1.800M108 1.800L109.7 3.300L112.75 .400L114 1.800M114 1.800L115.7 3.300L118.75 .400L120 1.800M120 1.800L121.7 3.300L124.75 .400L126 1.800M126 1.800L127.7 3.300L130.75 .400L132 1.800M132 1.800L133.7 3.300L136.75 .400L138 1.800M138 1.800L139.7 3.300L142.75 .400L144 1.800M144 1.800L145.7 3.300L148.75 .400L150 1.800M150 1.800L151.7 3.300L154.75 .400L156 1.800M156 1.800L157.7 3.300L160.75 .400L162 1.800M162 1.800L163.7 3.300L166.75 .400L168 1.800M168 1.800L169.7 3.300L172.75 .400L174 1.800M174 1.800L175.7 3.300L178.75 .400L180 1.800M180 1.800L181.7 3.300L184.75 .400L186 1.800M186 1.800L187.7 3.300L190.75 .400L192 1.800M192 1.800L193.7 3.300L196.75 .400L198 1.800M198 1.800L199.7 3.300L202.75 .400L204 1.800M204 1.800L205.7 3.300L208.75 .400L210 1.800M210 1.800L211.7 3.300L214.75 .400L216 1.800M216 1.800L217.7 3.300L220.75 .400L222 1.800M222 1.800L223.7 3.300L226.75 .400L228 1.800M228 1.800L229.7 3.300L232.75 .400L234 1.800M234 1.800L235.7 3.300L238.75 .400L240 1.800M240 1.800L241.7 3.300L244.75 .400L246 1.800M246 1.800L247.7 3.300L250.75 .400L252 1.800M252 1.800L253.7 3.300L256.75 .400L258 1.800M258 1.800L259.7 3.300L262.75 .400L264 1.800M264 1.800L265.7 3.300L268.75 .400L270 1.800M270 1.800L271.7 3.300L274.75 .400L276 1.800M276 1.800L277.7 3.300L280.75 .400L282 1.800M282 1.800L283.7 3.300L286.75 .400L288 1.800M288 1.800L289.7 3.300L292.75 .400L294 1.800M294 1.800L295.7 3.300L298.75 .400L300 1.800M300 1.800L301.7 3.300L304.75 .400L306 1.800M306 1.800L307.7 3.300L310.75 .400L312 1.800M312 1.800L313.7 3.300L316.75 .400L318 1.800M318 1.800L319.7 3.300L322.75 .400L324 1.800M324 1.800L325.7 3.300L328.75 .400L330 1.800M330 1.800L331.7 3.300L334.75 .400L336 1.800M336 1.800L337.7 3.300L340.75 .400L342 1.800M342 1.800L343.7 3.300L346.75 .400L348 1.800M348 1.800L349.7 3.300L352.75 .400L354 1.800M354 1.800L355.7 3.300L358.75 .400L360 1.800M360 1.800L361.7 3.300L364.75 .400L366 1.800M366 1.800L367.7 3.300L370.75 .400L372 1.800M372 1.800L373.7 3.300L376.75 .400L378 1.800M378 1.800L379.7 3.300L382.75 .400L384 1.800M384 1.800L385.7 3.300L388.75 .400L390 1.800M390 1.800L391.7 3.300L394.75 .400L396 1.800M396 1.800L397.7 3.300L400.75 .400L402 1.800M402 1.800L403.7 3.300L406.75 .400L408 1.800M408 1.800L409.7 3.300L412.75 .400L414 1.800M414 1.800L415.7 3.300L418.75 .400L420 1.800M420 1.800L421.7 3.300L424.75 .400L426 1.800M426 1.800L427.7 3.300L430.75 .400L432 1.800M432 1.800L433.7 3.300L436.75 .400L438 1.800M438 1.800L439.7 3.300L442.75 .400L444 1.800M444 1.800L445.7 3.300L448.75 .400L450 1.800M450 1.800L451.7 3.300L454.75 .400L456 1.800M456 1.800L457.7 3.300L460.75 .400L462 1.800M462 1.800L463.7 3.300L466.75 .400L468 1.800M468 1.800L469.7 3.300L472.75 .400L474 1.800M474 1.800L475.7 3.300L478.75 .400L480 1.800M480 1.800L481.7 3.300L484.75 .400L486 1.800M486 1.800L487.7 3.300L490.75 .400L492 1.800M492 1.800L493.7 3.300L496.75 .400L498 1.800M498 1.800L499.7 3.300L502.75 .400L504 1.800"/></svg></div>
<div class="ln" style="top:468px;color:#6e7681">26</div>
<div class="cl" style="top:468px"><span class="l">2.</span> Match the most suitable framework(s) based on:</div>
<div class="ln" style="top:486px;color:#6e7681">27</div>
<div class="cl" style="top:486px">   <span class="l"><i>-</i></span> Application scenario alignment</div>
<div class="ln" style="top:504px;color:#6e7681">28</div>
<div class="cl" style="top:504px">   <span class="l"><i>-</i></span> Task complexity (simple/medium/complex)</div>
<div class="ln" style="top:522px;color:#6e7681">29</div>
<div class="cl" style="top:522px">   <span class="l"><i>-</i></span> Domain category (marketing, decision analysis, education, etc.)</div>
<div class="ln" style="top:540px;color:#6e7681">30</div>
<div class="cl" style="top:540px"></div>
<div class="ln" style="top:558px;color:#6e7681">31</div>
<div class="cl" style="top:558px"><span class="b">**Framework Selection Guide by Complexity:**</span></div>
<div class="ln" style="top:576px;color:#6e7681">32</div>
<div class="cl" style="top:576px"></div>
<div class="ln" style="top:594px;color:#6e7681">33</div>
<div class="cl" style="top:594px">| Complexity | Recommended Frameworks |</div>
<div class="ln" style="top:612px;color:#6e7681">34</div>
<div class="cl" style="top:612px">|<i>-</i><i>-</i><i>-</i><i>-</i><i>-</i><i>-</i><i>-</i><i>-</i><i>-</i><i>-</i><i>-</i><i>-</i>|<i>-</i><i>-</i><i>-</i><i>-</i><i>-</i><i>-</i><i>-</i><i>-</i><i>-</i><i>-</i><i>-</i><i>-</i><i>-</i><i>-</i><i>-</i><i>-</i><i>-</i><i>-</i><i>-</i><i>-</i><i>-</i><i>-</i>|<svg class="sq" style="left:-0.5px" width="8.2" height="4" viewBox="0 0 8.2 4" fill="none" stroke="#c08a10" stroke-width="1.150" stroke-linejoin="round"><path d="M0 1.800L1.7 3.300L4.75 .400L6 1.800M6 1.800L7.7 3.300L10.75 .400L12 1.800"/></svg><svg class="sq" style="left:93.4px" width="8.2" height="4" viewBox="0 0 8.2 4" fill="none" stroke="#c08a10" stroke-width="1.150" stroke-linejoin="round"><path d="M0 1.800L1.7 3.300L4.75 .400L6 1.800M6 1.800L7.7 3.300L10.75 .400L12 1.800"/></svg><svg class="sq" style="left:259.6px" width="8.2" height="4" viewBox="0 0 8.2 4" fill="none" stroke="#c08a10" stroke-width="1.150" stroke-linejoin="round"><path d="M0 1.800L1.7 3.300L4.75 .400L6 1.800M6 1.800L7.7 3.300L10.75 .400L12 1.800"/></svg></div>
<div class="ln" style="top:630px;color:#6e7681">35</div>
<div class="cl" style="top:630px">| Simple (≤3 elements) | APE, ERA, TAG, RTF, BAB, PEE, ELI5 |</div>
<div class="ln" style="top:648px;color:#6e7681">36</div>
<div class="cl" style="top:648px">| Medium (4<i>-</i>5 elements) | RACE, CIDI, SPEAR, SPAR, FOCUS, SMART, GOPA, ORID, CARE, ROSE, PAUSE, TRACE, GRADE, TRACI, RODES |</div>
<div class="ln" style="top:666px;color:#6e7681">37</div>
<div class="cl" style="top:666px">| Complex (6+ elements) | RACEF, CRISPE, SCAMPER, Six Thinking Hats, ROSES, PROMPT, RISEN, RASCEF, Atomic Prompting |</div>
<div class="ln" style="top:684px;color:#6e7681">38</div>
<div class="cl" style="top:684px"></div>
<div class="ln" style="top:702px;color:#6e7681">39</div>
<div class="cl" style="top:702px"><span class="b">**Framework Selection Guide by Domain:**</span></div>
<div class="ln" style="top:720px;color:#6e7681">40</div>
<div class="cl" style="top:720px"></div>
<div class="ln" style="top:738px;color:#6e7681">41</div>
<div class="cl" style="top:738px">| Domain | Recommended Frameworks |</div>
<div class="ln" style="top:756px;color:#6e7681">42</div>
<div class="cl" style="top:756px">|<i>-</i><i>-</i><i>-</i><i>-</i><i>-</i><i>-</i><i>-</i><i>-</i>|<i>-</i><i>-</i><i>-</i><i>-</i><i>-</i><i>-</i><i>-</i><i>-</i><i>-</i><i>-</i><i>-</i><i>-</i><i>-</i><i>-</i><i>-</i><i>-</i><i>-</i><i>-</i><i>-</i><i>-</i><i>-</i><i>-</i>|<svg class="sq" style="left:-0.5px" width="8.2" height="4" viewBox="0 0 8.2 4" fill="none" stroke="#c08a10" stroke-width="1.150" stroke-linejoin="round"><path d="M0 1.800L1.7 3.300L4.75 .400L6 1.800M6 1.800L7.7 3.300L10.75 .400L12 1.800"/></svg><svg class="sq" style="left:64.5px" width="8.2" height="4" viewBox="0 0 8.2 4" fill="none" stroke="#c08a10" stroke-width="1.150" stroke-linejoin="round"><path d="M0 1.800L1.7 3.300L4.75 .400L6 1.800M6 1.800L7.7 3.300L10.75 .400L12 1.800"/></svg><svg class="sq" style="left:230.7px" width="8.2" height="4" viewBox="0 0 8.2 4" fill="none" stroke="#c08a10" stroke-width="1.150" stroke-linejoin="round"><path d="M0 1.800L1.7 3.300L4.75 .400L6 1.800M6 1.800L7.7 3.300L10.75 .400L12 1.800"/></svg></div>
<div class="ln" style="top:774px;color:#6e7681">43</div>
<div class="cl" style="top:774px">| Marketing Content | BAB, SPEAR, Challenge<i>-</i>Solution<i>-</i>Benefit, BLOG, PROMPT, RHODES |</div>
<div class="ln" style="top:792px;color:#6e7681">44</div>
<div class="cl" style="top:792px">| Decision Analysis | RICE, Pros and Cons, Six Thinking Hats, Tree of Thought, PAUSE, What If |</div>
<div class="ln" style="top:810px;color:#6e7681">45</div>
<div class="cl" style="top:810px">| Education &amp; Training | Bloom's Taxonomy, ELI5, Socratic Method, PEE, Hamburger Model |</div>
<div class="ln" style="top:828px;color:#6e7681">46</div>
<div class="cl" style="top:828px">| Product Development | SCAMPER, HMW, CIDI, RELIC, 3Cs Model |</div>
<div class="abs" style="left:65.5px;top:486px;width:1px;height:54px;background:#d3d3d3"></div>
<div class="abs" style="right:0;top:0;width:14.400px;bottom:0;border-left:1px solid #e8e8e8;background:#fff"></div>
<div class="abs" style="right:0;top:0.1px;width:13.600px;height:219.9px;background:#bdbdbd"></div>
<div class="abs" style="right:0;top:21.7px;width:13.600px;height:2px;background:#4a4a4a"></div>
<div class="abs" style="right:0;top:82.4px;width:4px;height:5px;background:#b5821a"></div>
<div class="abs" style="right:0;top:114.5px;width:4px;height:5px;background:#b5821a"></div>
<div class="abs" style="right:0;top:159.3px;width:4px;height:5px;background:#b5821a"></div>
<div class="abs" style="right:0;top:197.1px;width:4px;height:5px;background:#b5821a"></div>
<div class="abs" style="right:0;top:264.2px;width:4px;height:5px;background:#b5821a"></div>
<div class="abs" style="right:0;top:283.2px;width:4px;height:5px;background:#b5821a"></div>
<div class="abs" style="right:0;top:359.5px;width:4px;height:5px;background:#b5821a"></div>
<div class="abs" style="right:0;top:387.6px;width:4px;height:5px;background:#b5821a"></div>
<div class="abs" style="right:0;top:473.9px;width:4px;height:5px;background:#b5821a"></div>
<div class="abs" style="right:0;top:521.5px;width:4px;height:5px;background:#b5821a"></div>
<div class="abs" style="right:0;top:569.2px;width:4px;height:5px;background:#b5821a"></div>
</div>
</div>
<svg class="abs" style="left:0;top:0;overflow:visible" width="10" height="10"><rect x="61.6" y="377.1" width="372.5" height="116.8" rx=".6" fill="none" stroke="#d0061c" stroke-width="4.4"/></svg>
<svg class="abs" style="left:0;top:0;overflow:visible" width="10" height="10"><g fill="#d0061c" stroke="none"><path d="M1192.5 172.0 L1213.5 177.0 L1202.5 190.5z"/></g><path d="M1206.5 182.7 L1241.1 208.4" stroke="#d0061c" stroke-width="3.7" stroke-linecap="butt"/></svg>
<div id="status">
<div class="si" style="left:0;top:-1px;height:22.500px;width:34.2px;background:#1b46ad"><svg class="abs" style="left:8.7px;top:3.500px" width="16" height="16" viewBox="0 0 16 16" fill="none" stroke="#e8ecff" stroke-width="1.1" stroke-linecap="round" stroke-linejoin="round"><path d="M4.400 7.300 7.500 10.400 4.400 13.500M11.600 2.500 8.500 5.600 11.600 8.700"/></svg></div>
<div class="si" style="left:34.2px;top:-1px;height:22.500px;width:94.5px;background:#5e3f05;color:#fff;font-weight:500;-webkit-text-stroke:.3px"><svg class="abs" style="left:8.0px;top:3.400px" width="16" height="16" viewBox="0 0 16 16" fill="none" stroke="#fff" stroke-width="1.1"><circle cx="8" cy="8" r="6"/><path d="M10.500 5.500 9 9 5.500 10.500 7 7z" fill="#fff" stroke-width=".5"/></svg><span class="abs" style="left:27.3px;top:.900px;line-height:20.600px;font-size:12px;letter-spacing:0.183px">Quest<span style="position:relative;top:0px;font-size:11.600px;-webkit-text-stroke:.15px">模式</span></span></div>
<svg class="abs" style="left:133.4px;top:2.300px" width="16" height="16" viewBox="0 0 16 16" fill="none" stroke="#3b3b3b" stroke-width=".95" stroke-linecap="round" stroke-linejoin="round"><circle cx="5" cy="3.300" r="1.500"/><circle cx="5" cy="12.700" r="1.500"/><circle cx="11.300" cy="5.300" r="1.500"/><path d="M5 4.800v6.400M11.300 6.800c0 2.400-2 3-4 3.200-1.300.1-2.100.6-2.300 1.500"/></svg>
<span class="si" style="left:154.7px;color:#3b3b3b;letter-spacing:0.210px">main*</span>
<svg class="abs" style="left:191.7px;top:2.300px" width="16" height="16" viewBox="0 0 16 16" fill="none" stroke="#3b3b3b" stroke-width=".95" stroke-linecap="round" stroke-linejoin="round"><path d="M2.300 8a5.700 5.700 0 0 1 10.400-3.200M13.700 8a5.700 5.700 0 0 1-10.400 3.200M12.900 2.200v2.800h-2.800M3.100 13.800V11h2.800"/></svg>
<svg class="abs" style="left:220.8px;top:2.300px" width="16" height="16" viewBox="0 0 16 16" fill="none" stroke="#3b3b3b" stroke-width=".95" stroke-linecap="round" stroke-linejoin="round"><circle cx="5" cy="3" r="1.300"/><circle cx="5" cy="13" r="1.300"/><path d="M5 4.300v7.400M8.300 2.500v11M8.300 5l4 3-4 3"/></svg>
<svg class="abs" style="left:251.6px;top:2.300px" width="16" height="16" viewBox="0 0 16 16" fill="none" stroke="#3b3b3b" stroke-width=".95" stroke-linecap="round" stroke-linejoin="round"><path d="M9 3.200c2-1.300 4-1.200 4.800-1 .2.800.3 2.800-1 4.800L9.300 10.500 5.500 6.700zM5.500 6.700 3 7l-1 1.500 2.500.5M9.300 10.500 9 13l-1.500 1-.5-2.500M3.500 10.500 2 14l3.500-1.500"/></svg>
<svg class="abs" style="left:266.0px;top:2.300px" width="16" height="16" viewBox="0 0 16 16" fill="none" stroke="#3b3b3b" stroke-width=".95" stroke-linecap="round" stroke-linejoin="round"><path d="M10 3l3 3M8.800 4.200l3 3-1.600 1.600a2.100 2.100 0 0 1-3-3zM7.200 8.800 5.800 10.200M5.800 10.200a2 2 0 0 1-2.800 2.800" /></svg>
<span class="si" style="left:284.7px;color:#3b3b3b;letter-spacing:0.351px">Launchpad</span>
<svg class="abs" style="left:361.0px;top:2.300px" width="16" height="16" viewBox="0 0 16 16" fill="none" stroke="#3b3b3b" stroke-width=".95" stroke-linecap="round" stroke-linejoin="round"><circle cx="8" cy="8" r="5.800"/><path d="M5.800 5.800 10.200 10.200M10.200 5.800 5.800 10.200"/></svg>
<span class="si" style="left:380.1px;color:#3b3b3b">0</span>
<svg class="abs" style="left:389.9px;top:2.300px" width="16" height="16" viewBox="0 0 16 16" fill="none" stroke="#3b3b3b" stroke-width=".95" stroke-linecap="round" stroke-linejoin="round"><path d="M8 2.300 14.200 13.300H1.800zM8 6.500v3.500M8 11.600v.2"/></svg>
<span class="si" style="left:409.2px;color:#3b3b3b;letter-spacing:0.292px">20</span>
<span class="si" style="left:1190.9px;color:#3b3b3b;letter-spacing:0.274px"><span style="font-size:11.200px">行</span> 5<span style="font-size:11.200px">，列</span> 4</span>
<span class="si" style="left:1264.5px;color:#3b3b3b;letter-spacing:0.276px"><span style="font-size:11.200px">空格</span>: 3</span>
<span class="si" style="left:1318.8px;color:#3b3b3b;letter-spacing:0.564px">UTF-8</span>
<span class="si" style="left:1370.8px;color:#3b3b3b;letter-spacing:-0.115px">LF</span>
<svg class="abs" style="left:1400.1px;top:2.300px" width="16" height="16" viewBox="0 0 16 16" fill="none" stroke="#3b3b3b" stroke-width=".95" stroke-linecap="round" stroke-linejoin="round"><path d="M5.500 2.500c-1.500 0-1.800.7-1.800 1.800v2c0 1-.5 1.500-1.200 1.700.7.200 1.200.7 1.200 1.700v2c0 1.100.3 1.800 1.800 1.800M10.500 2.500c1.500 0 1.800.7 1.800 1.800v1.200"/><circle cx="11.800" cy="11.500" r="1.800"/><path d="M11.800 7.500v2.200"/></svg>
<span class="si" style="left:1421.4px;color:#3b3b3b;letter-spacing:0.383px">Markdown</span>
<svg class="abs" style="left:1493.5px;top:2.300px" width="16" height="16" viewBox="0 0 16 16" fill="none" stroke="#9a9a9a" stroke-width=".95" stroke-linecap="round" stroke-linejoin="round"><path d="M2 8h8M7 5l3 3-3 3M13 4v8"/></svg>
<span class="si" style="left:1513.6px;color:#9a9a9a;text-decoration:line-through;letter-spacing:-0.563px">NES</span>
<svg class="abs" style="left:1552.0px;top:2.300px" width="16" height="16" viewBox="0 0 16 16" fill="none" stroke="#3b3b3b" stroke-width=".95" stroke-linecap="round" stroke-linejoin="round"><circle cx="8" cy="8" r="5.800" stroke-width="1.500"/><path d="M8 8.300l2.200-2.800" stroke-width="1.300"/><path d="M4.800 10.800a3.800 3.800 0 0 1 6.400 0z" fill="#3b3b3b" stroke-width=".6"/></svg>
<span class="si" style="left:1572.2px;color:#3b3b3b;letter-spacing:-0.350px"><span style="font-size:11.200px">用量</span></span>
<svg class="abs" style="left:1608.2px;top:2.300px" width="16" height="16" viewBox="0 0 16 16" fill="none" stroke="#3b3b3b" stroke-width=".95" stroke-linecap="round" stroke-linejoin="round"><path d="M1.800 8.600 4.500 11.500 10.300 4.300M7.300 10.500l1 1L14.100 4.300"/></svg>
<span class="si" style="left:1629.4px;color:#3b3b3b;letter-spacing:0.362px">Prettier</span>
<svg class="abs" style="left:1685.4px;top:2.300px" width="16" height="16" viewBox="0 0 16 16" fill="none" stroke="#3b3b3b" stroke-width=".95" stroke-linecap="round" stroke-linejoin="round"><path d="M8 2.300c-2.500 0-4 1.800-4 4v3L2.800 11.500h10.400L12 9.300v-3c0-2.200-1.500-4-4-4zM6.500 12a1.500 1.500 0 0 0 3 0"/></svg>
</div>
</div></body></html>
